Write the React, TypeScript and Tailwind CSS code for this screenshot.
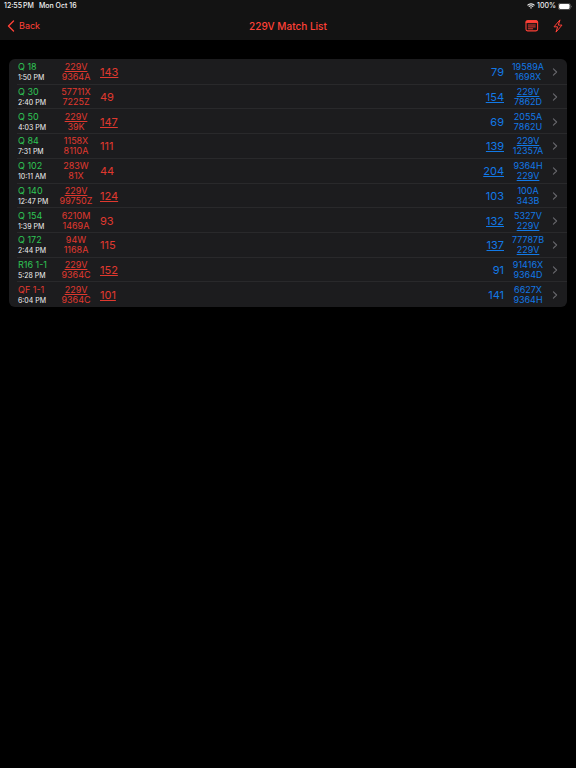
type Match = {
  name: string;
  time: string;
  red: [string, string];
  redScore: number;
  blueScore: number;
  blue: [string, string];
  lost?: boolean;
};

const TEAM = "229V";

const matches: Match[] = [
  { name: "Q 18", time: "1:50 PM", red: ["229V", "9364A"], redScore: 143, blueScore: 79, blue: ["19589A", "1698X"] },
  { name: "Q 30", time: "2:40 PM", red: ["57711X", "7225Z"], redScore: 49, blueScore: 154, blue: ["229V", "7862D"] },
  { name: "Q 50", time: "4:03 PM", red: ["229V", "39K"], redScore: 147, blueScore: 69, blue: ["2055A", "7862U"] },
  { name: "Q 84", time: "7:31 PM", red: ["1158X", "8110A"], redScore: 111, blueScore: 139, blue: ["229V", "12357A"] },
  { name: "Q 102", time: "10:11 AM", red: ["283W", "81X"], redScore: 44, blueScore: 204, blue: ["9364H", "229V"] },
  { name: "Q 140", time: "12:47 PM", red: ["229V", "99750Z"], redScore: 124, blueScore: 103, blue: ["100A", "343B"] },
  { name: "Q 154", time: "1:39 PM", red: ["6210M", "1469A"], redScore: 93, blueScore: 132, blue: ["5327V", "229V"] },
  { name: "Q 172", time: "2:44 PM", red: ["94W", "1168A"], redScore: 115, blueScore: 137, blue: ["77787B", "229V"] },
  { name: "R16 1-1", time: "5:28 PM", red: ["229V", "9364C"], redScore: 152, blueScore: 91, blue: ["91416X", "9364D"] },
  { name: "QF 1-1", time: "6:04 PM", red: ["229V", "9364C"], redScore: 101, blueScore: 141, blue: ["6627X", "9364H"], lost: true },
];

function Alliance({ teams }: { teams: [string, string] }) {
  return (
    <div className="w-10 shrink-0 text-center text-[9px] leading-[10px]">
      {teams.map((team) => (
        <div key={team} className={team === TEAM ? "underline underline-offset-1" : ""}>
          {team}
        </div>
      ))}
    </div>
  );
}

function Score({ value, own }: { value: number; own: boolean }) {
  return (
    <span className={own ? "text-[11px] leading-4 underline underline-offset-1" : "text-[11px] leading-4"}>
      {value}
    </span>
  );
}

function MatchRow({ match }: { match: Match }) {
  return (
    <li className="group flex pl-2">
      <button
        type="button"
        className="flex min-w-0 flex-1 items-center border-b border-[#29292b] pr-[9px] pt-px text-left group-last:border-transparent"
      >
        <div className="w-[39px] shrink-0 whitespace-nowrap pl-px">
          <div className={match.lost ? "text-[9px] leading-[11px] text-[#e0392f]" : "text-[9px] leading-[11px] text-[#2fc655]"}>
            {match.name}
          </div>
          <div className="text-[7px] leading-[11px] text-[#f2f2f2]">{match.time}</div>
        </div>
        <div className="flex flex-1 items-center gap-1 text-[#e0392f]">
          <Alliance teams={match.red} />
          <Score value={match.redScore} own={match.red.includes(TEAM)} />
        </div>
        <div className="flex items-center gap-1 text-[#1279e6]">
          <Score value={match.blueScore} own={match.blue.includes(TEAM)} />
          <Alliance teams={match.blue} />
        </div>
        <svg viewBox="0 0 6 10" className="ml-1 h-2 w-[6px] shrink-0" fill="none" stroke="#68686d" strokeWidth="1.4" strokeLinecap="round" strokeLinejoin="round" aria-hidden="true">
          <path d="M1 1l4 4-4 4" />
        </svg>
      </button>
    </li>
  );
}

export default function App() {
  return (
    <div className="min-h-screen bg-black font-['Inter','Liberation_Sans',sans-serif] text-white">
      <header className="bg-[#131313]">
        <div className="flex h-3 items-center justify-between px-1 text-[7px] font-medium leading-3 text-[#f2f2f2]">
          <div className="flex gap-[5px]">
            <span className="flex gap-px">
              <span>12:55</span>
              <span>PM</span>
            </span>
            <span>Mon Oct 16</span>
          </div>
          <div className="flex items-center gap-[2px]">
            <svg viewBox="0 0 16 12" className="h-[6px] w-2" fill="none" stroke="#f2f2f2" strokeWidth="2.2" aria-label="Wi-Fi">
              <path d="M1 4.6a10 10 0 0 1 14 0M3.6 7.3a6.2 6.2 0 0 1 8.8 0" />
              <path d="M8 11.5L5.8 9.3a3.2 3.2 0 0 1 4.4 0z" fill="#f2f2f2" stroke="none" />
            </svg>
            <span>100%</span>
            <svg viewBox="0 0 28 14" className="h-[7px] w-[14px]" aria-label="Battery">
              <rect x="0.7" y="0.7" width="24" height="12.6" rx="3.6" fill="none" stroke="#7d7d7d" strokeWidth="1.2" />
              <rect x="2.2" y="2.2" width="21" height="9.6" rx="2.2" fill="#fff" />
              <path d="M26 4.8v4.4c1.6-.6 1.6-3.8 0-4.4z" fill="#8a8a8a" />
            </svg>
          </div>
        </div>
        <nav className="grid h-7 grid-cols-[1fr_auto_1fr] items-center px-[7px] text-[#ff4137]">
          <button type="button" className="flex items-center gap-1 justify-self-start text-[9px] leading-4">
            <svg viewBox="0 0 8 12" className="h-3 w-2" fill="none" stroke="currentColor" strokeWidth="1.4" strokeLinecap="round" strokeLinejoin="round" aria-hidden="true">
              <path d="M6.5 1L1.5 6l5 5" />
            </svg>
            Back
          </button>
          <h1 className="text-[10px] font-medium leading-4">{TEAM} Match List</h1>
          <div className="flex items-center gap-[14px] justify-self-end pr-[6px]">
            <button type="button" aria-label="Match notes">
              <svg viewBox="0 0 14 14" className="h-[14px] w-[14px]" fill="none" stroke="currentColor" strokeLinecap="round" aria-hidden="true">
                <rect x="1" y="1.7" width="11.6" height="10.2" rx="1.6" strokeWidth="1.1" />
                <path d="M1 3.6V3.3a1.6 1.6 0 0 1 1.6-1.6h8.4a1.6 1.6 0 0 1 1.6 1.6v.3z" fill="currentColor" strokeLinecap="butt" />
                <path d="M3.3 6h7M3.3 7.9h7M3.3 9.8h4.4" strokeWidth="0.9" />
              </svg>
            </button>
            <button type="button" aria-label="World skills">
              <svg viewBox="0 0 10 14" className="h-[14px] w-[10px]" fill="none" stroke="currentColor" strokeWidth="1" strokeLinejoin="round" aria-hidden="true">
                <path d="M7 .9L1 7.8h3.6L3 13.1l6-7H5.3z" />
              </svg>
            </button>
          </div>
        </nav>
      </header>
      <main className="px-[9px] pt-[19px]">
        <ul className="grid min-h-[248px] auto-rows-fr overflow-hidden rounded-md bg-[#1c1c1e] pt-px">
          {matches.map((match) => (
            <MatchRow key={match.name} match={match} />
          ))}
        </ul>
      </main>
    </div>
  );
}
